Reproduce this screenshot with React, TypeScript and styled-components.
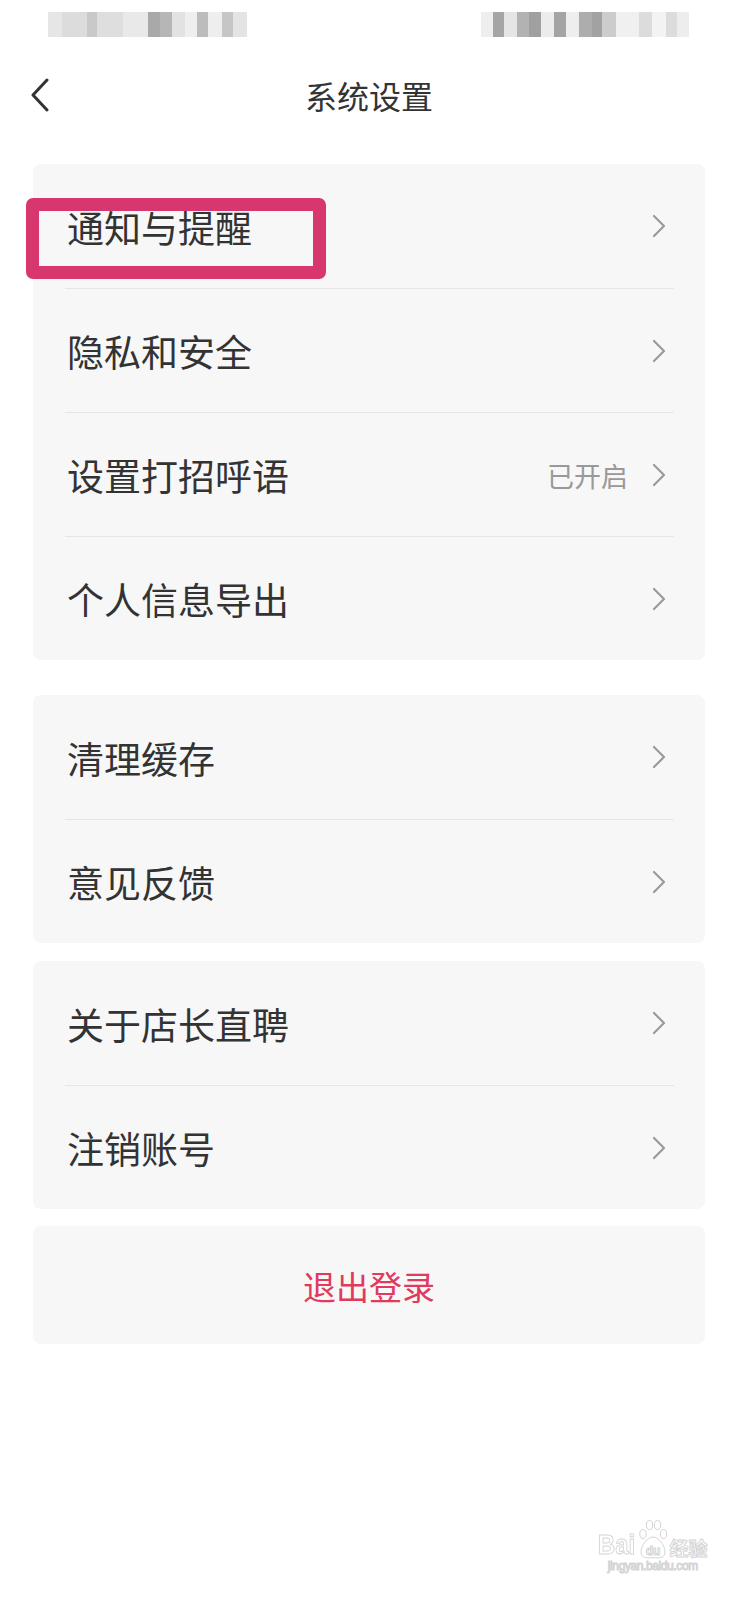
import styled, { createGlobalStyle } from 'styled-components';

const GlobalStyle = createGlobalStyle`
    * {
        box-sizing: border-box;
    }
    body {
        margin: 0;
        background-color: #fff;
        font-family: "Noto Sans CJK SC", "Noto Sans", sans-serif;
        color: #333;
    }
`;

const Page = styled.div`
    position: relative;
    width: 738px;
    min-height: 1600px;
    background-color: #fff;
`;

const StatusBar = styled.div`
    display: flex;
    justify-content: space-between;
    height: 50px;
    padding: 12px 49px 0 48px;
`;

const Mosaic = styled.div`
    display: flex;
    height: 25px;
    filter: blur(0.6px);
`;

const Cell = styled.div<{ $w: number; $c: string }>`
    width: ${(p) => p.$w}px;
    height: 100%;
    background-color: ${(p) => p.$c};
`;

const Header = styled.header`
    display: grid;
    grid-template-columns: 1fr auto 1fr;
    align-items: center;
    height: 90px;
`;

const BackBtn = styled.div`
    display: flex;
    align-items: center;
    padding-left: 29px;
    cursor: pointer;
`;

const Title = styled.h1`
    margin: 0;
    font-size: 32px;
    font-weight: 400;
    line-height: 1;
    color: #333;
`;

const List = styled.main`
    display: flex;
    flex-direction: column;
    padding: 24px 33px 0;
`;

const Card = styled.section<{ $space?: number }>`
    display: flex;
    flex-direction: column;
    margin-top: ${(p) => p.$space ?? 0}px;
    background-color: #f7f7f7;
    border-radius: 8px;
`;

const Row = styled.div`
    position: relative;
    display: flex;
    align-items: center;
    height: 124px;
    margin: 0 31px 0 32px;
    padding: 0 8px 0 2px;

    & + & {
        border-top: 1px solid #e6e6e6;
    }
`;

const Label = styled.span`
    flex: 1;
    font-size: 37px;
    line-height: 1;
    padding-top: 2px;
    color: #333;
`;

const Value = styled.span`
    margin-right: 24px;
    font-size: 27px;
    line-height: 1;
    padding-top: 2px;
    color: #999;
`;

const Highlight = styled.div`
    position: absolute;
    left: -39px;
    top: 34px;
    width: 300px;
    height: 81px;
    border: 13px solid #d8366f;
    border-radius: 7px;
    z-index: 2;
`;

const LogoutCard = styled(Card)`
    align-items: center;
    justify-content: center;
    height: 118px;
`;

const LogoutText = styled.span`
    font-size: 33px;
    line-height: 1;
    padding-top: 2px;
    color: #e23a5c;
    cursor: pointer;
`;

const Watermark = styled.div`
    position: absolute;
    left: 598px;
    top: 1519px;
    display: flex;
    flex-direction: column;
    align-items: center;
    gap: 1px;
    pointer-events: none;
`;

const MarkLine = styled.div`
    display: flex;
    align-items: flex-end;
    gap: 2px;
`;

const Outline = styled.span<{ $size: number }>`
    font-family: "Liberation Sans", Arial, sans-serif;
    font-size: ${(p) => p.$size}px;
    font-weight: 700;
    line-height: 1;
    color: transparent;
    -webkit-text-stroke: 1px #d4d4d4;
`;

const Brand = styled(Outline)`
    transform: scaleX(0.85);
    transform-origin: left bottom;
    margin-right: -6px;
`;

const CjkOutline = styled(Outline)`
    font-family: "Noto Sans CJK SC", sans-serif;
    margin-bottom: 2px;
`;

const Site = styled(Outline)`
    font-weight: 400;
    letter-spacing: -0.4px;
`;

const left: [number, string][] = [
    [14, '#e6e6e6'], [25, '#dcdcdc'], [10, '#c9c9c9'], [26, '#dedede'], [25, '#e9e9e9'],
    [12, '#a9a9a9'], [12, '#b6b6b6'], [13, '#e2e2e2'], [12, '#efefef'], [11, '#bcbcbc'],
    [14, '#eeeeee'], [11, '#c6c6c6'], [14, '#e4e4e4'],
];

const right: [number, string][] = [
    [12, '#eeeeee'], [11, '#a5a5a5'], [13, '#e5e5e5'], [12, '#b2b2b2'], [12, '#a0a0a0'],
    [13, '#ececec'], [12, '#a4a4a4'], [13, '#eeeeee'], [13, '#adadad'], [10, '#a2a2a2'],
    [14, '#cccccc'], [23, '#f0f0f0'], [13, '#dcdcdc'], [14, '#f3f3f3'], [11, '#dcdcdc'],
    [12, '#ededed'],
];

const Chevron = () => (
    <svg width="14" height="24" viewBox="0 0 14 24" fill="none">
        <path d="M2 2 L12 12 L2 22" stroke="#9a9a9a" strokeWidth="2.2" strokeLinecap="round" strokeLinejoin="round" />
    </svg>
);

const groups = [
    { space: 0, rows: [{ label: '通知与提醒', mark: true }, { label: '隐私和安全' }, { label: '设置打招呼语', value: '已开启' }, { label: '个人信息导出' }] },
    { space: 35, rows: [{ label: '清理缓存' }, { label: '意见反馈' }] },
    { space: 18, rows: [{ label: '关于店长直聘' }, { label: '注销账号' }] },
];

const Settings = () => {
    return (
        <Page>
            <GlobalStyle />
            <StatusBar>
                <Mosaic>
                    {left.map(([w, c], i) => <Cell key={i} $w={w} $c={c} />)}
                </Mosaic>
                <Mosaic>
                    {right.map(([w, c], i) => <Cell key={i} $w={w} $c={c} />)}
                </Mosaic>
            </StatusBar>
            <Header>
                <BackBtn>
                    <svg width="22" height="34" viewBox="0 0 22 34" fill="none">
                        <path d="M18 2 L4 17 L18 32" stroke="#333" strokeWidth="3" strokeLinecap="round" strokeLinejoin="round" />
                    </svg>
                </BackBtn>
                <Title>系统设置</Title>
                <div />
            </Header>
            <List>
                {groups.map((g, gi) => (
                    <Card key={gi} $space={g.space}>
                        {g.rows.map((r: { label: string; value?: string; mark?: boolean }) => (
                            <Row key={r.label}>
                                <Label>{r.label}</Label>
                                {r.value && <Value>{r.value}</Value>}
                                <Chevron />
                                {r.mark && <Highlight />}
                            </Row>
                        ))}
                    </Card>
                ))}
                <LogoutCard $space={17}>
                    <LogoutText>退出登录</LogoutText>
                </LogoutCard>
            </List>
            <Watermark>
                <MarkLine>
                    <Brand $size={28}>Bai</Brand>
                    <svg width="30" height="40" viewBox="0 0 30 40" fill="none" stroke="#d4d4d4" strokeWidth="1">
                        <ellipse cx="5" cy="15" rx="3.2" ry="4.5" />
                        <ellipse cx="11.5" cy="6" rx="3.2" ry="4.5" />
                        <ellipse cx="19.5" cy="6" rx="3.2" ry="4.5" />
                        <ellipse cx="25.5" cy="15" rx="3.2" ry="4.5" />
                        <path d="M15 18 C9 18 3 27 3 33 C3 39 9 39.5 15 38.5 C21 39.5 27 39 27 33 C27 27 21 18 15 18 Z" />
                        <text x="15" y="36" textAnchor="middle" fontFamily="Liberation Sans, Arial, sans-serif" fontSize="12" fontWeight="700" fill="none">du</text>
                    </svg>
                    <CjkOutline $size={19}>经验</CjkOutline>
                </MarkLine>
                <Site $size={12}>jingyan.baidu.com</Site>
            </Watermark>
        </Page>
    );
};

export default Settings;
